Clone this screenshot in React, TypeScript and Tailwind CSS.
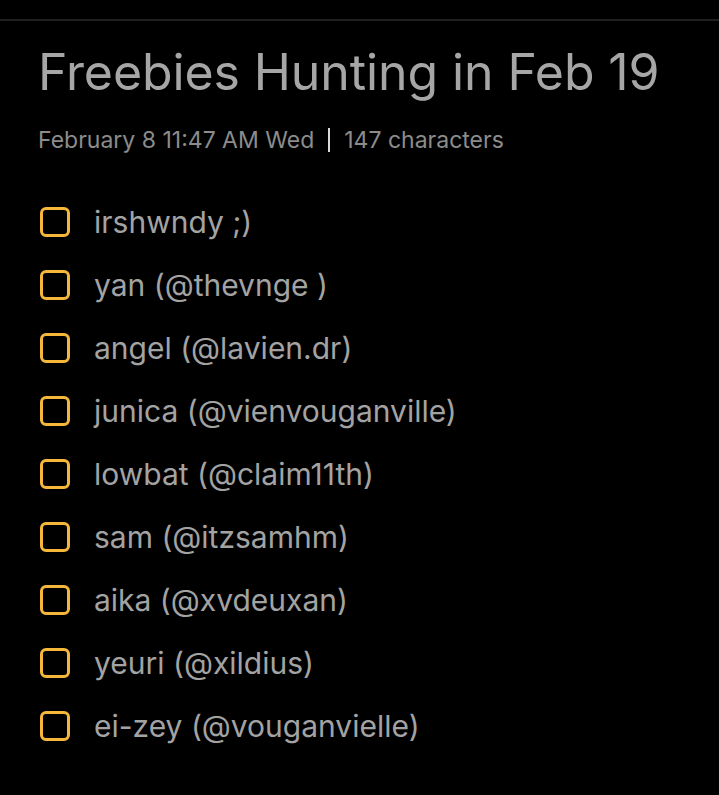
const items = [
  "irshwndy ;)",
  "yan (@thevnge )",
  "angel (@lavien.dr)",
  "junica (@vienvouganville)",
  "lowbat (@claim11th)",
  "sam (@itzsamhm)",
  "aika (@xvdeuxan)",
  "yeuri (@xildius)",
  "ei-zey (@vouganvielle)",
];

export default function App() {
  return (
    <div className="min-h-[795px] w-full bg-black font-['Inter',sans-serif]">
      <div className="h-[19px]" />
      <div className="h-[2px] bg-[#1f1f1f]" />
      <div className="px-[38px] pt-[21px]">
        <h1 className="text-[50px] leading-[60px] text-[#a6a6a6] tracking-[-0.1px]">
          Freebies Hunting in Feb 19
        </h1>
        <div className="mt-[23px] flex items-center text-[23px] leading-[30px] text-[#8c8c8c]">
          <span>February 8 11:47 AM Wed</span>
          <span className="mx-[14px] h-[24px] w-[2px] bg-[#d9d9d9]" />
          <span>147 characters</span>
        </div>
        <ul className="mt-[35px] flex flex-col">
          {items.map((it) => (
            <li key={it} className="flex h-[63px] items-center">
              <span className="ml-[2px] h-[30px] w-[30px] shrink-0 rounded-[6px] border-[3px] border-[#f5b73a]" />
              <span className="ml-[24px] text-[30px] leading-[36px] text-[#a3a3a3]">{it}</span>
            </li>
          ))}
        </ul>
      </div>
    </div>
  );
}
